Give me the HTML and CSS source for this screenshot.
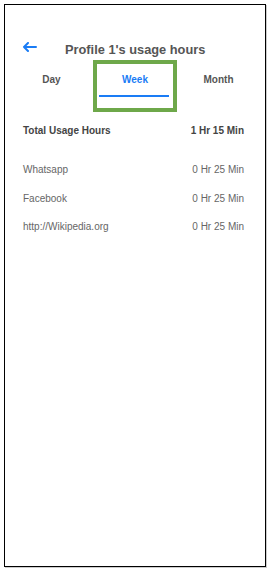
FILE: index.html
```html
<!DOCTYPE html>
<html>

<head>
    <title>Usage hours</title>
    <link rel="stylesheet" href="styles.css">
</head>

<body>
    <div class="phone">
        <div class="header">
            <svg class="back" width="15" height="10" viewBox="0 0 15 10">
                <path d="M14 5H2M6 1L2 5l4 4" fill="none" stroke="#1a7cf5" stroke-width="2" stroke-linecap="round" stroke-linejoin="round"/>
            </svg>
            <span class="title">Profile 1's usage hours</span>
        </div>
        <div class="tabs">
            <div class="tab">Day</div>
            <div class="tab active">Week<span class="bar"></span></div>
            <div class="tab">Month</div>
        </div>
        <div class="row total">
            <span>Total Usage Hours</span>
            <span>1 Hr 15 Min</span>
        </div>
        <div class="list">
            <div class="row">
                <span>Whatsapp</span>
                <span>0 Hr 25 Min</span>
            </div>
            <div class="row">
                <span>Facebook</span>
                <span>0 Hr 25 Min</span>
            </div>
            <div class="row">
                <span>http://Wikipedia.org</span>
                <span>0 Hr 25 Min</span>
            </div>
        </div>
    </div>
</body>

</html>
```

FILE: styles.css
```css
body {
    margin: 0;
    background: #fff;
    font-family: "Liberation Sans", Arial, sans-serif;
}

.phone {
    box-sizing: border-box;
    width: 262px;
    height: 563px;
    margin: 4px;
    border: 1.5px solid #000;
    box-shadow: 1px 1px 0 #ccc;
    padding-top: 35px;
}

.header {
    display: flex;
    align-items: center;
    height: 18px;
    padding-left: 17px;
}

.back {
    margin-top: -5px;
}

.title {
    margin-left: 28px;
    font-size: 12.8px;
    font-weight: bold;
    color: #555;
}

.tabs {
    display: grid;
    grid-template-columns: 83px 84px 83px;
    padding-left: 5px;
    margin-top: 2px;
}

.tab {
    position: relative;
    box-sizing: border-box;
    height: 52px;
    border: 4px solid transparent;
    padding-top: 10px;
    text-align: center;
    font-size: 10px;
    font-weight: bold;
    color: #555;
}

.tab.active {
    border-color: #6ea84a;
    color: #1a7cf5;
}

.bar {
    position: absolute;
    left: 2px;
    right: 4px;
    top: 31px;
    height: 2px;
    background: #1a7cf5;
}

.row {
    display: flex;
    justify-content: space-between;
    padding: 0 21px 0 18px;
    font-size: 10px;
    color: #666;
}

.total {
    margin-top: 13px;
    font-weight: bold;
    color: #444;
}

.list {
    margin-top: 28px;
}

.list .row {
    height: 28.5px;
}
```
